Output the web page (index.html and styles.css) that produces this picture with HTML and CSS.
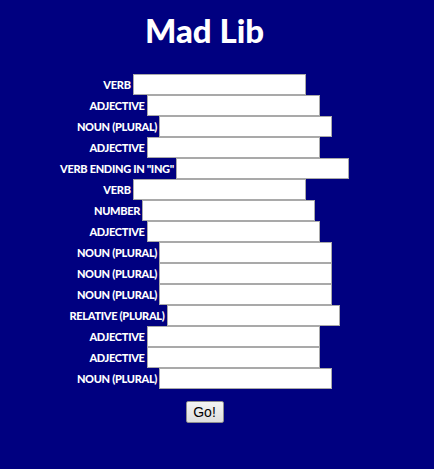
FILE: index.html
```html
<!DOCTYPE html>
<html>
<head>
<meta charset="utf-8">
<link rel="stylesheet" href="styles.css">
</head>
<body>
<main class="page">
  <h1 class="title">Mad Lib</h1>
  <form class="form">
    <div class="row"><label class="lbl">VERB</label><input class="field" type="text"></div>
    <div class="row"><label class="lbl">ADJECTIVE</label><input class="field" type="text"></div>
    <div class="row"><label class="lbl">NOUN (PLURAL)</label><input class="field" type="text"></div>
    <div class="row"><label class="lbl">ADJECTIVE</label><input class="field" type="text"></div>
    <div class="row"><label class="lbl">VERB ENDING IN "ING"</label><input class="field" type="text"></div>
    <div class="row"><label class="lbl">VERB</label><input class="field" type="text"></div>
    <div class="row"><label class="lbl">NUMBER</label><input class="field" type="text"></div>
    <div class="row"><label class="lbl">ADJECTIVE</label><input class="field" type="text"></div>
    <div class="row"><label class="lbl">NOUN (PLURAL)</label><input class="field" type="text"></div>
    <div class="row"><label class="lbl">NOUN (PLURAL)</label><input class="field" type="text"></div>
    <div class="row"><label class="lbl">NOUN (PLURAL)</label><input class="field" type="text"></div>
    <div class="row"><label class="lbl">RELATIVE (PLURAL)</label><input class="field" type="text"></div>
    <div class="row"><label class="lbl">ADJECTIVE</label><input class="field" type="text"></div>
    <div class="row"><label class="lbl">ADJECTIVE</label><input class="field" type="text"></div>
    <div class="row"><label class="lbl">NOUN (PLURAL)</label><input class="field" type="text"></div>
    <div class="actions"><button class="go" type="button">Go!</button></div>
  </form>
</main>
</body>
</html>
```
FILE: styles.css
```css
html, body {
  margin: 0;
  padding: 0;
  background: #000080;
}
.page {
  padding: 0 25px 0 0;
  display: flex;
  flex-direction: column;
  align-items: center;
}
.title {
  margin: 10px 0 0 0;
  height: 64px;
  font-family: "Lato", sans-serif;
  font-weight: 900;
  font-size: 33px;
  line-height: 40px;
  color: #fff;
}
.form {
  display: flex;
  flex-direction: column;
  align-items: center;
}
.row {
  display: flex;
  align-items: center;
  height: 21px;
}
.lbl {
  font-family: "Lato", sans-serif;
  font-weight: 900;
  font-size: 11px;
  letter-spacing: -0.3px;
  color: #fff;
  margin-right: 2px;
}
.field {
  box-sizing: border-box;
  width: 173px;
  height: 21px;
  margin: 0;
  border: 1px solid #a9a9a9;
  background: #fff;
  padding: 0 2px;
}
.actions {
  margin-top: 12px;
}
.go {
  box-sizing: border-box;
  width: 38px;
  height: 22px;
  font-family: "Liberation Sans", Arial, sans-serif;
  font-size: 14px;
  color: #000;
  border: 1px solid #8e8e8e;
  border-radius: 2px;
  background: linear-gradient(#f4f4f4, #dedede);
  padding: 0;
}
```
